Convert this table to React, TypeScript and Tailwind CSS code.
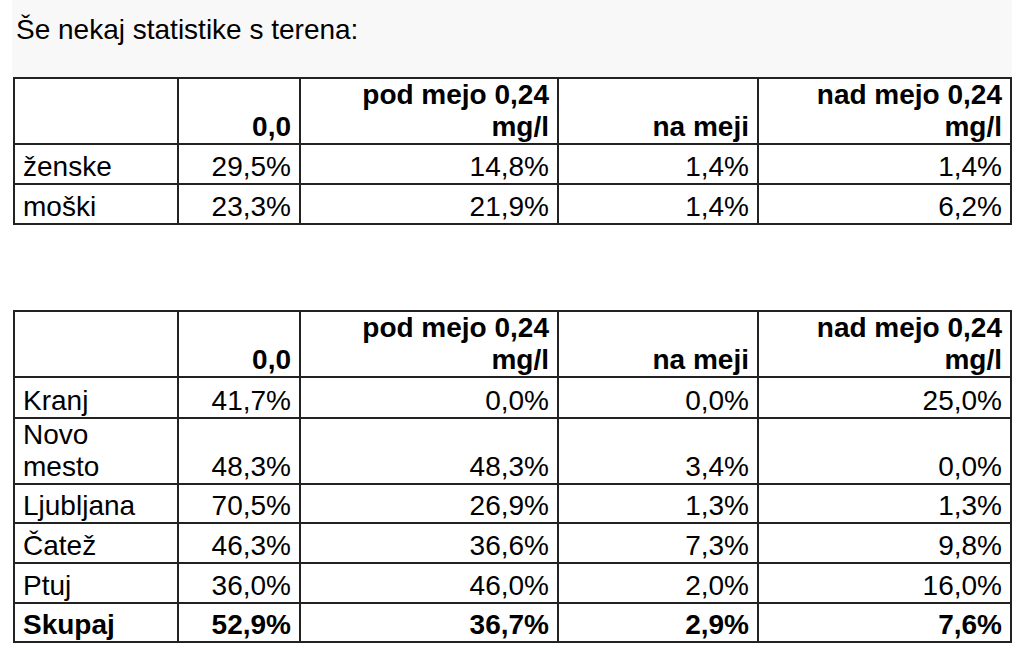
import React from "react";

type Row = { label: React.ReactNode; vals: string[]; bold?: boolean; h: number };

const colW = [164, 122, 258, 200, 253];

function Header() {
  return (
    <tr className="h-[66px]">
      <th className="border-2 border-[#222] px-[8px] align-bottom"></th>
      <th className="border-2 border-[#222] px-[8px] align-bottom text-right font-bold">0,0</th>
      <th className="border-2 border-[#222] px-[8px] align-bottom text-right font-bold">
        pod mejo 0,24
        <br />
        mg/l
      </th>
      <th className="border-2 border-[#222] px-[8px] align-bottom text-right font-bold">na meji</th>
      <th className="border-2 border-[#222] px-[8px] align-bottom text-right font-bold">
        nad mejo 0,24
        <br />
        mg/l
      </th>
    </tr>
  );
}

function DataTable({ rows }: { rows: Row[] }) {
  return (
    <table className="border-collapse table-fixed w-[997px] ml-[13px]">
      <colgroup>
        {colW.map((w, i) => (
          <col key={i} style={{ width: w }} />
        ))}
      </colgroup>
      <tbody>
        <Header />
        {rows.map((r, i) => (
          <tr key={i} style={{ height: r.h }}>
            <td
              className={
                "border-2 border-[#222] px-[8px] align-bottom text-left " +
                (r.bold ? "font-bold" : "font-normal")
              }
            >
              {r.label}
            </td>
            {r.vals.map((v, j) => (
              <td
                key={j}
                className={
                  "border-2 border-[#222] px-[8px] align-bottom text-right " +
                  (r.bold ? "font-bold" : "font-normal")
                }
              >
                {v}
              </td>
            ))}
          </tr>
        ))}
      </tbody>
    </table>
  );
}

export default function App() {
  const t1: Row[] = [
    { label: "ženske", vals: ["29,5%", "14,8%", "1,4%", "1,4%"], h: 40 },
    { label: "moški", vals: ["23,3%", "21,9%", "1,4%", "6,2%"], h: 40 },
  ];
  const t2: Row[] = [
    { label: "Kranj", vals: ["41,7%", "0,0%", "0,0%", "25,0%"], h: 41 },
    {
      label: (
        <>
          Novo
          <br />
          mesto
        </>
      ),
      vals: ["48,3%", "48,3%", "3,4%", "0,0%"],
      h: 65,
    },
    { label: "Ljubljana", vals: ["70,5%", "26,9%", "1,3%", "1,3%"], h: 39 },
    { label: "Čatež", vals: ["46,3%", "36,6%", "7,3%", "9,8%"], h: 40 },
    { label: "Ptuj", vals: ["36,0%", "46,0%", "2,0%", "16,0%"], h: 40 },
    { label: "Skupaj", vals: ["52,9%", "36,7%", "2,9%", "7,6%"], h: 39, bold: true },
  ];
  return (
    <div className="w-[1024px] h-[652px] bg-white text-black text-[28px] leading-[32px] font-['Liberation_Sans',Arial,sans-serif] overflow-hidden">
      <div className="ml-[12px] w-[1000px] h-[77px] bg-[#f8f8f8] pt-[14px] pl-[4px]">
        Še nekaj statistike s terena:
      </div>
      <DataTable rows={t1} />
      <div className="h-[85px]" />
      <DataTable rows={t2} />
    </div>
  );
}
